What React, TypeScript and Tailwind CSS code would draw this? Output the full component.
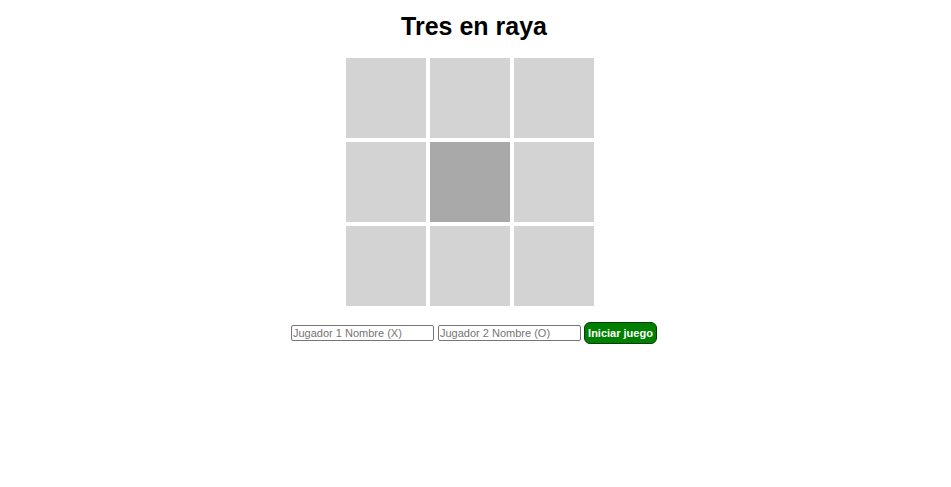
import React from 'react'

const App = () => {
  const cells = Array.from({ length: 9 }, (_, i) => i)

  return (
    <div className="min-h-screen bg-white text-black font-['Liberation_Sans',Arial,sans-serif]">
      <h1 className="pt-3 pb-[17px] pr-[3px] text-center text-[25px] font-bold leading-[29px]">
        Tres en raya
      </h1>

      <div className="mx-auto w-[259px]">
        <div className="grid grid-cols-[repeat(3,80px)] gap-1">
          {cells.map((i) => (
            <div
              key={i}
              className={i === 4 ? 'h-20 w-20 bg-[#a9a9a9]' : 'h-20 w-20 bg-[#d3d3d3]'}
            />
          ))}
        </div>
      </div>

      <div className="mt-4 flex items-center justify-center pr-[3px]">
        <input
          type="text"
          placeholder="Jugador 1 Nombre (X)"
          className="h-4 w-[143px] rounded-[2px] border border-[#767676] px-[1px] text-[11px] leading-none placeholder:text-[#757575]"
        />
        <input
          type="text"
          placeholder="Jugador 2 Nombre (O)"
          className="ml-1 h-4 w-[143px] rounded-[2px] border border-[#767676] px-[1px] text-[11px] leading-none placeholder:text-[#757575]"
        />
        <button className="ml-[3px] h-[22px] w-[73px] rounded-[6px] border border-[#0b3d0b] bg-[#008000] text-[11px] font-bold text-white">
          Iniciar juego
        </button>
      </div>
    </div>
  )
}

export default App
